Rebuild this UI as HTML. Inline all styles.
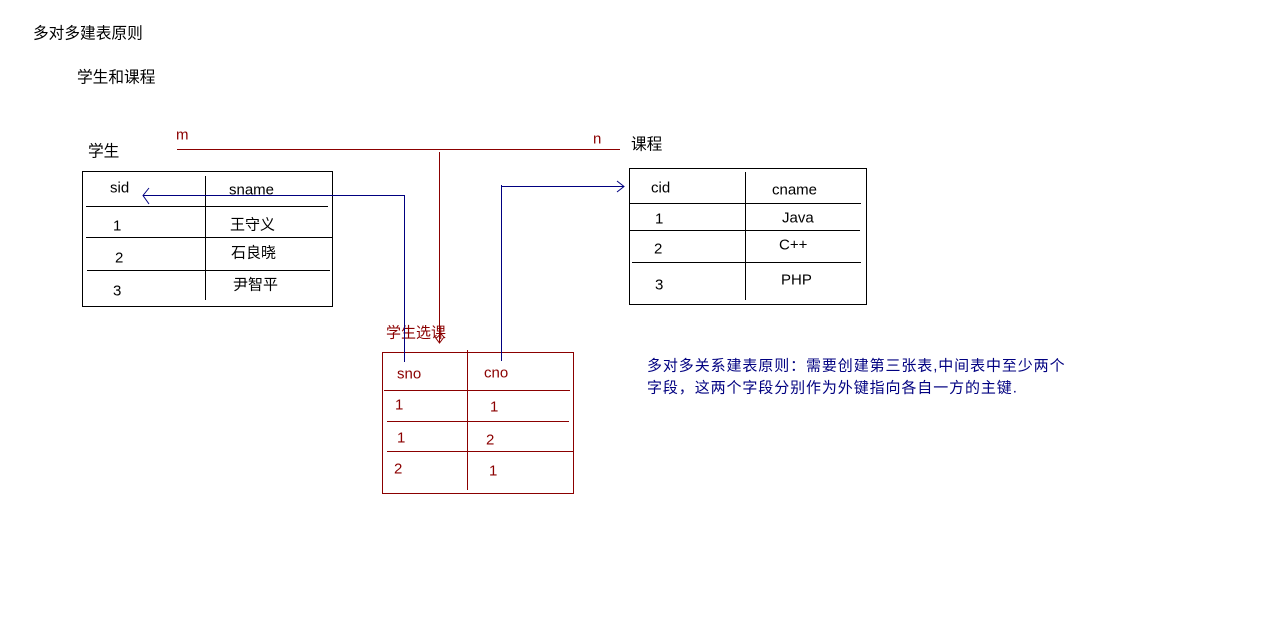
<!DOCTYPE html>
<html><head><meta charset="utf-8"><style>
html,body{margin:0;padding:0;background:#fff;width:1288px;height:617px;overflow:hidden}
svg text{font-family:"Liberation Sans","Noto Sans CJK SC",sans-serif;font-size:15px;dominant-baseline:central}
svg text.h{font-size:15.7px}
</style></head><body>
<svg width="1288" height="617" xmlns="http://www.w3.org/2000/svg">
<g fill="#000">
<text class="h" x="33" y="34">多对多建表原则</text>
<text class="h" x="77" y="78">学生和课程</text>
<text class="h" x="88" y="152">学生</text>
<text class="h" x="631" y="145">课程</text>
</g>
<g fill="#8b0000">
<text x="176" y="135">m</text>
<text x="593" y="139">n</text>
<text x="386" y="333">学生选课</text>
</g>
<g stroke="#8b0000" stroke-width="1" fill="none">
<line x1="177" y1="149.5" x2="620" y2="149.5"/>
<line x1="439.5" y1="152" x2="439.5" y2="343"/>
<polyline points="435,337 439.5,343 444,337"/>
<rect x="382.5" y="352.5" width="191" height="141"/>
<line x1="467.5" y1="350" x2="467.5" y2="490"/>
<line x1="384" y1="390.5" x2="570" y2="390.5"/>
<line x1="387" y1="421.5" x2="569" y2="421.5"/>
<line x1="387" y1="451.5" x2="573" y2="451.5"/>
</g>
<g stroke="#000" stroke-width="1" fill="none">
<rect x="82.5" y="171.5" width="250" height="135"/>
<line x1="205.5" y1="176" x2="205.5" y2="300"/>
<line x1="86" y1="206.5" x2="328" y2="206.5"/>
<line x1="86" y1="237.5" x2="332" y2="237.5"/>
<line x1="87" y1="270.5" x2="330" y2="270.5"/>
<rect x="629.5" y="168.5" width="237" height="136"/>
<line x1="745.5" y1="172" x2="745.5" y2="300"/>
<line x1="629" y1="203.5" x2="861" y2="203.5"/>
<line x1="629" y1="230.5" x2="860" y2="230.5"/>
<line x1="632" y1="262.5" x2="861" y2="262.5"/>
</g>
<g stroke="#000080" stroke-width="1" fill="none">
<line x1="143" y1="195.5" x2="405" y2="195.5"/>
<polyline points="149,188 143,195.5 149,204"/>
<line x1="404.5" y1="196" x2="404.5" y2="362"/>
<line x1="501.5" y1="185" x2="501.5" y2="361"/>
<line x1="501" y1="186.5" x2="624" y2="186.5"/>
<polyline points="617,181 624,186.5 617,192"/>
</g>
<g fill="#000">
<text x="110" y="188">sid</text>
<text x="229" y="190">sname</text>
<text x="113" y="226">1</text>
<text x="230" y="225">王守义</text>
<text x="115" y="258">2</text>
<text x="231" y="253">石良晓</text>
<text x="113" y="291">3</text>
<text x="233" y="285">尹智平</text>
<text x="651" y="188">cid</text>
<text x="772" y="190">cname</text>
<text x="655" y="219">1</text>
<text x="782" y="218">Java</text>
<text x="654" y="249">2</text>
<text x="779" y="245">C++</text>
<text x="655" y="285">3</text>
<text x="781" y="280">PHP</text>
</g>
<g fill="#8b0000">
<text x="397" y="374">sno</text>
<text x="484" y="373">cno</text>
<text x="395" y="405">1</text>
<text x="490" y="407">1</text>
<text x="397" y="438">1</text>
<text x="486" y="440">2</text>
<text x="394" y="469">2</text>
<text x="489" y="471">1</text>
</g>
<g fill="#000080" style="letter-spacing:0.9px">
<text x="647" y="366">多对多关系建表原则：需要创建第三张表,中间表中至少两个</text>
<text x="647" y="388">字段，这两个字段分别作为外键指向各自一方的主键.</text>
</g>
</svg>
</body></html>
